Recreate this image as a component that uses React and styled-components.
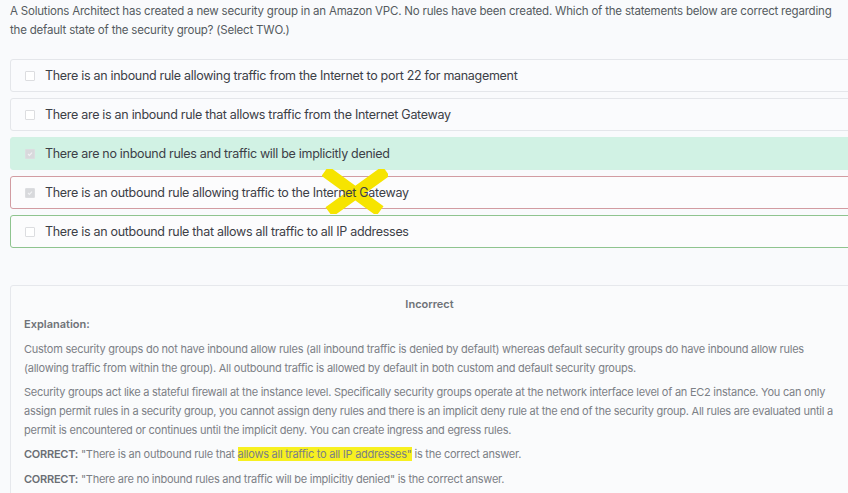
import React from 'react';
import styled, { createGlobalStyle } from 'styled-components';

const GlobalStyle = createGlobalStyle`
  html, body {
    margin: 0;
    padding: 0;
    background: #f9fafc;
    overflow: hidden;
  }
  body {
    font-family: Inter, "Open Sans", "Liberation Sans", sans-serif;
  }
`;

const Page = styled.div`
  width: 848px;
  height: 493px;
  padding: 2px 0 0 10px;
  box-sizing: border-box;
  overflow: hidden;
`;

const Question = styled.p`
  margin: 0 0 19px;
  font-size: 11.5px;
  line-height: 19px;
  color: #555a60;
  letter-spacing: -0.2px;
`;

const Options = styled.div`
  display: flex;
  flex-direction: column;
  gap: 6px;
  margin-right: -12px;
`;

const tone = {
  plain: { border: '#e4e6ea', bg: '#fafbfd' },
  picked: { border: '#d2f1e4', bg: '#d1f2e4' },
  wrong: { border: '#d29ca2', bg: '#fcfcfd' },
  missed: { border: '#8fc48f', bg: '#fcfcfd' },
};

const Option = styled.div`
  position: relative;
  display: flex;
  align-items: center;
  height: 33px;
  box-sizing: border-box;
  padding-left: 14px;
  border: 1px solid ${(p) => tone[p.$state].border};
  border-radius: 3px;
  background: ${(p) => tone[p.$state].bg};
`;

const Box = styled.span`
  width: 8px;
  height: 8px;
  flex: none;
  border: 1px solid #dcdde0;
  border-radius: 1px;
  background: ${(p) => (p.$checked ? '#d8d9dc' : '#fff')};
  margin-right: 10px;
  display: flex;
  align-items: center;
  justify-content: center;
`;

const OptionText = styled.span`
  position: relative;
  z-index: 1;
  font-size: 12.5px;
  color: #3c4047;
  letter-spacing: -0.3px;
`;

const Cross = styled.svg`
  position: absolute;
  left: 311px;
  top: -8px;
  pointer-events: none;
`;

const Panel = styled.section`
  margin: 37px -12px 0 0;
  border: 1px solid #e6e8ec;
  border-radius: 3px;
  background: #fafbfc;
  padding: 11px 12px 0 13px;
  height: 230px;
`;

const Verdict = styled.div`
  text-align: center;
  font-size: 11px;
  font-weight: 600;
  color: #6f7378;
  line-height: 14px;
  padding-right: 12px;
`;

const Label = styled.div`
  font-size: 11px;
  font-weight: 600;
  color: #6f7378;
  margin: 6px 0 9px;
  line-height: 14px;
`;

const Para = styled.p`
  margin: ${(p) => (p.$loose ? '5px 0 0' : '0 0 4px')};
  font-size: 11px;
  line-height: 19.3px;
  color: #7c8086;
  letter-spacing: -0.25px;
`;

const Strong = styled.b`
  font-weight: 600;
  color: #6a6e74;
`;

const Mark = styled.mark`
  background: #f7f020;
  color: #7c8086;
`;

const options = [
  { text: 'There is an inbound rule allowing traffic from the Internet to port 22 for management', state: 'plain' },
  { text: 'There are is an inbound rule that allows traffic from the Internet Gateway', state: 'plain' },
  { text: 'There are no inbound rules and traffic will be implicitly denied', state: 'picked', checked: true },
  { text: 'There is an outbound rule allowing traffic to the Internet Gateway', state: 'wrong', checked: true, crossed: true },
  { text: 'There is an outbound rule that allows all traffic to all IP addresses', state: 'missed' },
];

function Check() {
  return (
    <svg width="6" height="6" viewBox="0 0 6 6">
      <path d="M1 3l1.4 1.4L5 1.6" fill="none" stroke="#f2f2f4" strokeWidth="1.1" />
    </svg>
  );
}

export default function App() {
  return (
    <>
      <GlobalStyle />
      <Page>
        <Question>
          A Solutions Architect has created a new security group in an Amazon VPC. No rules have been created. Which of the statements below are correct regarding the default state of the security group? (Select TWO.)
        </Question>
        <Options>
          {options.map((o) => (
            <Option key={o.text} $state={o.state}>
              <Box $checked={o.checked}>{o.checked && <Check />}</Box>
              <OptionText>{o.text}</OptionText>
              {o.crossed && (
                <Cross width="66" height="45" viewBox="0 0 66 45">
                  <path d="M3 2 L58 42 M64 2 L7 43" stroke="#f6e400" strokeWidth="12" />
                </Cross>
              )}
            </Option>
          ))}
        </Options>
        <Panel>
          <Verdict>Incorrect</Verdict>
          <Label>Explanation:</Label>
          <Para>
            Custom security groups do not have inbound allow rules (all inbound traffic is denied by default) whereas default security groups do have inbound allow rules (allowing traffic from within the group). All outbound traffic is allowed by default in both custom and default security groups.
          </Para>
          <Para>
            Security groups act like a stateful firewall at the instance level. Specifically security groups operate at the network interface level of an EC2 instance. You can only assign permit rules in a security group, you cannot assign deny rules and there is an implicit deny rule at the end of the security group. All rules are evaluated until a permit is encountered or continues until the implicit deny. You can create ingress and egress rules.
          </Para>
          <Para $loose>
            <Strong>CORRECT:</Strong> "There is an outbound rule that <Mark>allows all traffic to all IP addresses"</Mark> is the correct answer.
          </Para>
          <Para $loose>
            <Strong>CORRECT:</Strong> "There are no inbound rules and traffic will be implicitly denied" is the correct answer.
          </Para>
        </Panel>
      </Page>
    </>
  );
}
